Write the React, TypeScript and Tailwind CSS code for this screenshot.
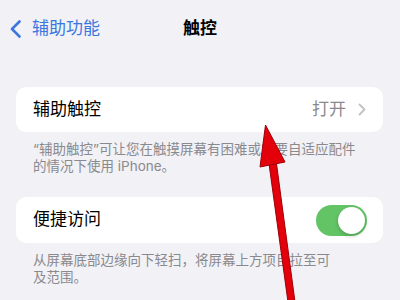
const font = {
  fontFamily: 'Inter, "Noto Sans CJK SC", "Noto Sans", sans-serif',
};

function Toggle() {
  return (
    <div className="flex h-[31px] w-[51px] items-center justify-end rounded-full bg-[#63c466] p-[2px]">
      <div className="h-[27px] w-[27px] rounded-full bg-white shadow-[0_2px_4px_rgba(0,0,0,0.2)]" />
    </div>
  );
}

export default function App() {
  return (
    <div
      className="relative h-[300px] w-[400px] overflow-hidden bg-[#f1f1f6]"
      style={font}
    >
      {/* Nav bar */}
      <div className="relative mt-[7px] flex h-[44px] items-center pl-[9px]">
        <svg width="14" height="18" viewBox="0 0 14 18">
          <polyline
            points="10.5,1.5 3,9 10.5,16.5"
            fill="none"
            stroke="#3a78e0"
            strokeWidth="2.6"
            strokeLinecap="round"
            strokeLinejoin="round"
          />
        </svg>
        <span className="ml-[9px] text-[17px] text-[#3a78e0]">辅助功能</span>
        <span className="absolute left-1/2 -translate-x-1/2 text-[17px] font-semibold text-black">
          触控
        </span>
      </div>

      {/* AssistiveTouch */}
      <div className="ml-[16px] mr-[17px] mt-[36px] flex h-[45px] items-center rounded-[10px] bg-white pl-[17px] pr-[17px]">
        <span className="text-[17px] text-black">辅助触控</span>
        <span className="ml-auto text-[17px] text-[#8a8a8e]">打开</span>
        <svg className="ml-[12px]" width="8" height="13" viewBox="0 0 8 13">
          <polyline
            points="1.5,1.5 6.5,6.5 1.5,11.5"
            fill="none"
            stroke="#c2c2c6"
            strokeWidth="1.8"
            strokeLinecap="round"
            strokeLinejoin="round"
          />
        </svg>
      </div>
      <p className="pl-[33px] pt-[9px] text-[13.5px] leading-[16.5px] text-[#8a8a8e]">
        “辅助触控”可让您在触摸屏幕有困难或需要自适应配件
        <br />
        的情况下使用 iPhone。
      </p>

      {/* Reachability */}
      <div className="ml-[16px] mr-[17px] mt-[23px] flex h-[46px] items-center rounded-[10px] bg-white pl-[17px] pr-[16px]">
        <span className="text-[17px] text-black">便捷访问</span>
        <div className="ml-auto">
          <Toggle />
        </div>
      </div>
      <p className="pl-[33px] pt-[9px] text-[13.5px] leading-[16.5px] text-[#8a8a8e]">
        从屏幕底部边缘向下轻扫，将屏幕上方项目拉至可
        <br />
        及范围。
      </p>

      {/* Red annotation arrow */}
      <svg
        className="pointer-events-none absolute inset-0"
        width="400"
        height="300"
        viewBox="0 0 400 300"
      >
        <polygon
          points="268.5,160 276,160 295,302 288,302"
          fill="#e3000b"
          stroke="#9c0008"
          strokeWidth="1"
        />
        <polygon
          points="265.5,125 285,162 260,167"
          fill="#e3000b"
          stroke="#9c0008"
          strokeWidth="1"
          strokeLinejoin="round"
        />
      </svg>
    </div>
  );
}
